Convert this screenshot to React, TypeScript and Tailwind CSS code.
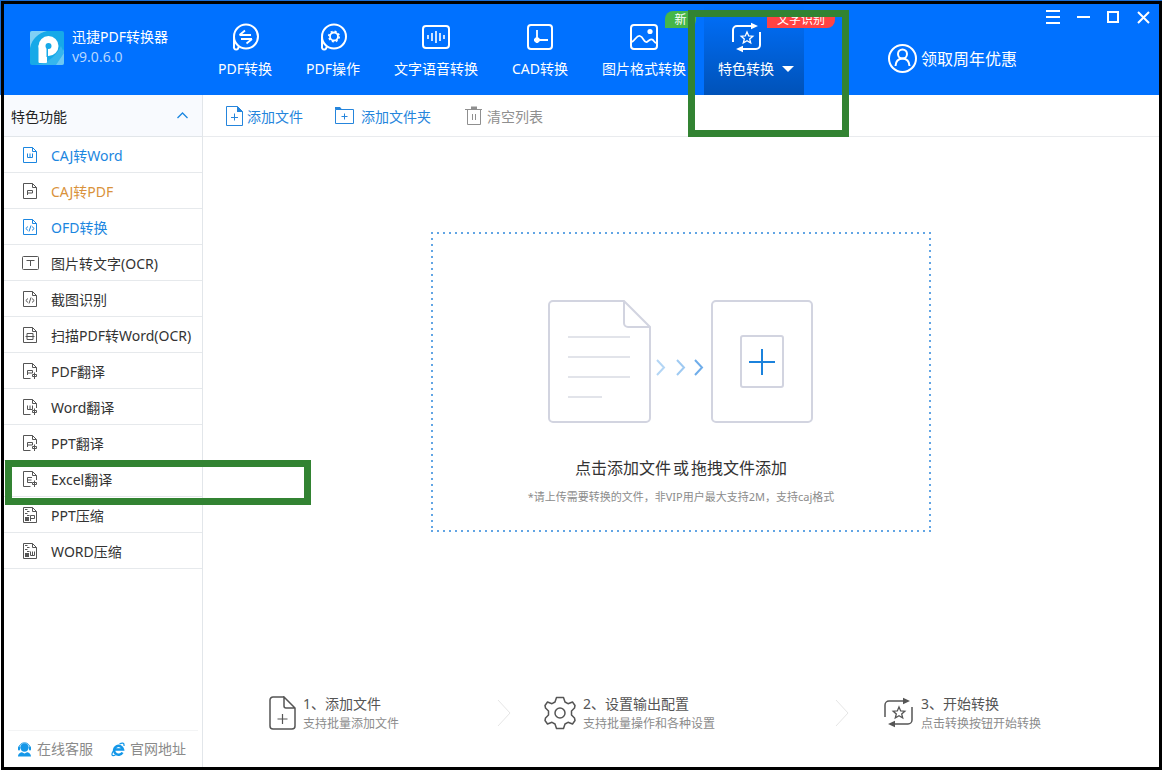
import React from "react";

type IconProps = { className?: string };

const Svg = ({
  w,
  h,
  className = "",
  sw = 1,
  children,
}: {
  w: number;
  h: number;
  className?: string;
  sw?: number;
  children: React.ReactNode;
}) => (
  <svg
    width={w}
    height={h}
    viewBox={`0 0 ${w} ${h}`}
    fill="none"
    stroke="currentColor"
    strokeWidth={sw}
    className={`shrink-0 ${className}`}
    aria-hidden="true"
  >
    {children}
  </svg>
);

const Logo = () => (
  <svg width="34" height="34" viewBox="0 0 34 34" className="shrink-0" aria-hidden="true">
    <defs>
      <clipPath id="logo-clip">
        <rect width="34" height="34" rx="2" />
      </clipPath>
    </defs>
    <g clipPath="url(#logo-clip)">
      <rect width="34" height="34" fill="#16a9e8" />
      <path d="M0 0H17C8 2 2 8 0 17Z" fill="#7fd0f5" />
      <path d="M34 18C32 27 26 33 17 34H34Z" fill="#6cc8f3" />
      <path d="M5 34C14 33 25 28 31 15L34 22L26 34Z" fill="#35b6ee" />
      <circle cx="18.5" cy="15" r="10" fill="#fff" />
      <rect x="8.500" y="14" width="8.500" height="18" rx="1" fill="#fff" />
      <circle cx="18.5" cy="15" r="3" fill="#16a9e8" />
      <rect x="16.500" y="15" width="1.500" height="11" fill="#16a9e8" />
    </g>
  </svg>
);

const ConvertIcon = () => (
  <Svg w={30} h={32} sw={2}>
    <circle cx="16" cy="14.500" r="12" />
    <path d="M4 15V24.500A2.300 2.300 0 1 0 8.400 24.500" />
    <path d="M9.500 13H21M9.500 13L15 8.500M22 17H11M22 17L16.500 21.500" strokeWidth="1.800" />
  </Svg>
);

const OperateIcon = () => (
  <Svg w={30} h={32} sw={2}>
    <circle cx="16" cy="14.500" r="12" />
    <path d="M4 15V24.500A2.300 2.300 0 1 0 8.400 24.500" />
    <circle cx="16" cy="14.500" r="4" strokeWidth="1.800" />
    <circle cx="16" cy="14.500" r="5.200" strokeWidth="1.600" strokeDasharray="2 2.080" />
  </Svg>
);

const VoiceIcon = () => (
  <Svg w={30} h={32} sw={2}>
    <rect x="2" y="4" width="26" height="22" rx="3" />
    <path d="M7 13V17M11 11V19M15 9V21M19 11V19M23 13V17" strokeWidth="1.600" />
  </Svg>
);

const CadIcon = () => (
  <Svg w={30} h={32} sw={2}>
    <rect x="3" y="3" width="24" height="24" rx="3" />
    <path d="M12 8V21M9 18H23" strokeWidth="1.800" />
    <circle cx="12" cy="18" r="2.800" fill="currentColor" stroke="none" />
  </Svg>
);

const ImageIcon = () => (
  <Svg w={30} h={32} sw={2}>
    <rect x="2" y="3" width="26" height="24" rx="3" />
    <circle cx="21" cy="9.500" r="2.600" fill="currentColor" stroke="none" />
    <path d="M3 20C7 17 8 13 11 14C15 15 14 21 18 20C21 18 22 16 24 18C25.500 20 26 21 27.500 21" strokeWidth="1.800" />
  </Svg>
);

const LoopStarIcon = ({ sw = 2 }: { sw?: number }) => (
  <Svg w={32} h={32} sw={sw}>
    <path d="M3 20V8A4 4 0 0 1 7 4H22M30 10V23A4 4 0 0 1 26 27H12" />
    <path d="M21 0.800L28 4L21 7.200ZM13 23.800L6 27L13 30.200Z" fill="currentColor" stroke="none" />
    <path
      d="M17 10L18.700 13.900L22.800 14.200L19.700 16.900L20.700 21L17 18.800L13.300 21L14.300 16.900L11.200 14.200L15.300 13.900Z"
      strokeWidth="1.300"
    />
  </Svg>
);

/* Sheet outline with a folded corner, shared by the sidebar icons. */
const sheet = "M0.500 0.500H9.500L13.500 4.500V15.500H0.500ZM9.500 0.500V4.500H13.500";
const openSheet = "M7.500 15.500H0.500V0.500H9.500L13.500 4.500V9M9.500 0.500V4.500H13.500";
const glyphW = "M4.500 6.500V10.500H9.500V6.500M7 6.500V10.500";
const glyphP = "M4.500 12V7.500H9.500V10H4.500";
const glyphE = "M9 6.500H4.500V11.500H9M4.500 9H8.500";
const transMark = "M9.500 11.500H13.500V13.500H9.500ZM11.500 9.500V16";

const Doc = ({ d, base = sheet }: { d: string; base?: string }) => (
  <Svg w={18} h={16}>
    <g transform="translate(1 0)">
      <path d={base} />
      <path d={d} />
    </g>
  </Svg>
);

const ZipDoc = ({ d }: { d: string }) => (
  <Svg w={18} h={16}>
    <g transform="translate(1 0)">
      <path d={sheet} />
      <path d="M2 2.500H4.500M4 4.500H6.500M2 6.500H4.500M4 8.500H6.500" />
      <rect x="2" y="10" width="4" height="4" fill="currentColor" stroke="none" />
      <path d={d} />
    </g>
  </Svg>
);

const OcrIcon = () => (
  <Svg w={18} h={16}>
    <rect x="0.500" y="1.500" width="16" height="13" rx="1" />
    <path d="M4.500 5.500H12.500M8.500 5.500V11" />
  </Svg>
);

const codeMark = "M5 7.500L2.800 9.500L5 11.500M9 7.500L11.200 9.500L9 11.500M8 6.500L6 12.500";

const navItems = [
  { label: "PDF转换", icon: <ConvertIcon /> },
  { label: "PDF操作", icon: <OperateIcon /> },
  { label: "文字语音转换", icon: <VoiceIcon /> },
  { label: "CAD转换", icon: <CadIcon /> },
  { label: "图片格式转换", icon: <ImageIcon />, badge: "新" },
];

const sideItems = [
  { label: "CAJ转Word", icon: <Doc d={glyphW} />, tone: "text-[#1b86e0]", iconTone: "text-[#1b86e0]" },
  { label: "CAJ转PDF", icon: <Doc d={glyphP} />, tone: "text-[#d9923b]", iconTone: "text-[#555]" },
  { label: "OFD转换", icon: <Doc d={codeMark} />, tone: "text-[#1b86e0]", iconTone: "text-[#1b86e0]" },
  { label: "图片转文字(OCR)", icon: <OcrIcon /> },
  { label: "截图识别", icon: <Doc d={codeMark} /> },
  { label: "扫描PDF转Word(OCR)", icon: <Doc d="M4 6.500H10V12.500H4ZM2.500 9.500H11.500" /> },
  { label: "PDF翻译", icon: <Doc base={openSheet} d={glyphP + transMark} /> },
  { label: "Word翻译", icon: <Doc base={openSheet} d={glyphW + transMark} /> },
  { label: "PPT翻译", icon: <Doc base={openSheet} d={glyphP + transMark} /> },
  { label: "Excel翻译", icon: <Doc base={openSheet} d={glyphE + transMark} />, marked: true },
  { label: "PPT压缩", icon: <ZipDoc d="M7.500 14V8.500H11.500V11.500H7.500" /> },
  { label: "WORD压缩", icon: <ZipDoc d="M7.500 8.500V12.500H11.500V8.500M9.500 8.500V12.500" /> },
];

const StepFile = () => (
  <Svg w={27} h={34} sw={1.5}>
    <path d="M15 1H4A3 3 0 0 0 1 4V30A3 3 0 0 0 4 33H23A3 3 0 0 0 26 30V12L15 1V10A2 2 0 0 0 17 12H26" />
    <path d="M13.500 18V28M8.500 23H18.500" strokeWidth="1.200" />
  </Svg>
);

const StepGear = () => (
  <Svg w={32} h={34} sw={1.5}>
    <path
      strokeLinejoin="round"
      d="M12.500 1.500H19.500L21 6L24 7.700L28.500 6L31 9.500L30.500 12L27.500 15V19L30.500 22L31 24.500L28.500 28L24 26.300L21 28L19.500 32.500H12.500L11 28L8 26.300L3.500 28L1 24.500L1.500 22L4.500 19V15L1.500 12L1 9.500L3.500 6L8 7.700L11 6Z"
    />
    <circle cx="16" cy="17" r="5" />
  </Svg>
);

const StepChevron = () => (
  <Svg w={14} h={28} className="mr-[33px] text-[#e6e6e6]">
    <path d="M1 1L13 14L1 27" />
  </Svg>
);

const Step = ({ icon, title, note, grow }: { icon: React.ReactNode; title: string; note: string; grow: string }) => (
  <div className={`flex items-center gap-[7px] ${grow}`}>
    <span className="text-[#555]">{icon}</span>
    <div className="pt-0.5 whitespace-nowrap">
      <p className="text-sm leading-5 text-[#555]">{title}</p>
      <p className="text-xs leading-5 text-[#8c8c8c]">{note}</p>
    </div>
  </div>
);

const Illustration = ({ className = "" }: IconProps) => (
  <svg width="266" height="124" viewBox="0 0 266 124" fill="none" className={className} aria-hidden="true">
    <g stroke="#d2d4e0" strokeWidth="2">
      <path d="M76 1H5A4 4 0 0 0 1 5V118A4 4 0 0 0 5 122H98A4 4 0 0 0 102 118V27L76 1V23A4 4 0 0 0 80 27H102" />
      <rect x="164" y="1" width="100" height="121" rx="4" />
      <rect x="193" y="36" width="42" height="51" rx="2" />
    </g>
    <path d="M20 37H82M20 57H82M20 77H82M20 97H54" stroke="#e2e4ea" strokeWidth="2" />
    <path d="M109 60L116 67.500L109 75" stroke="#b4d6f5" strokeWidth="2" />
    <path d="M129 60L136 67.500L129 75" stroke="#9fcaf2" strokeWidth="2" />
    <path d="M147 60L154 67.500L147 75" stroke="#6fadea" strokeWidth="2" />
    <path d="M214 49V75M201 62H227" stroke="#1b82dc" strokeWidth="2" />
  </svg>
);

export default function App() {
  return (
    <div className="flex min-h-screen flex-col bg-[linear-gradient(#1c6fd6_0_95px,#fff_95px)] pt-px pl-px font-['Noto_Sans','Noto_Sans_CJK_SC',sans-serif] text-sm">
      <div className="flex grow flex-col border-[3px] border-black bg-white">
        <header className="relative z-10 flex h-[91px] shrink-0 bg-[#0071ff] text-white">
          <div className="flex w-[198px] shrink-0 items-start gap-2 pt-[27px] pl-[26px]">
            <Logo />
            <div className="-mt-1 whitespace-nowrap">
              <h1 className="text-sm leading-5">迅捷PDF转换器</h1>
              <p className="text-sm leading-5 text-[#b5d6ff]">v9.0.6.0</p>
            </div>
          </div>

          <nav className="flex gap-[2px] whitespace-nowrap">
            {navItems.map((item) => (
              <button key={item.label} type="button" className="relative flex flex-col items-center px-4 pt-[18px]">
                {item.icon}
                <span className="mt-[5px] leading-5">{item.label}</span>
                {item.badge && (
                  <span className="absolute top-[7px] left-[79px] h-[17px] w-[31px] rounded-tl-lg rounded-br-lg bg-[#45b649] text-center text-xs leading-[17px]">
                    {item.badge}
                  </span>
                )}
              </button>
            ))}
            <div className="relative flex">
              <button
                type="button"
                className="flex w-[100px] flex-col items-start bg-linear-to-b from-[#0071ff] to-[#0052b8] pt-[18px] pl-[14px]"
              >
                <span className="flex w-14 justify-center">
                  <LoopStarIcon />
                </span>
                <span className="mt-[5px] flex items-center gap-2 leading-5">
                  特色转换
                  <Svg w={12} h={6}>
                    <path d="M0 0H12L6 6Z" fill="currentColor" stroke="none" />
                  </Svg>
                </span>
              </button>
              <span className="absolute top-[7px] left-[63px] h-[17px] w-[68px] rounded-br-lg bg-[#ff4343] text-center text-xs leading-[17px]">
                文字识别
              </span>
              <span className="pointer-events-none absolute top-[6px] -right-[45px] -bottom-[42px] -left-4 border-[7px] border-[#328332]" />
            </div>
          </nav>

          <button type="button" className="ml-[84px] flex items-center gap-1 self-start pt-10 text-base whitespace-nowrap">
            <Svg w={29} h={29} sw={2}>
              <circle cx="14.500" cy="14.500" r="13.500" />
              <circle cx="14.500" cy="10" r="4.500" />
              <path d="M7.500 22C7.500 17.500 10.500 14.500 14.500 14.500S21.500 17.500 21.500 22" />
            </Svg>
            <span className="leading-6">领取周年优惠</span>
          </button>

          <div className="ml-auto flex items-start gap-4 pt-[6px] pr-[9px]">
            <button type="button" aria-label="菜单">
              <Svg w={14} h={15} sw={2}>
                <path d="M0 1H14M0 7H14M0 13H14" />
              </Svg>
            </button>
            <button type="button" aria-label="最小化">
              <Svg w={14} h={15} sw={2}>
                <path d="M1 7H14" />
              </Svg>
            </button>
            <button type="button" aria-label="最大化">
              <Svg w={14} h={15} sw={2}>
                <rect x="2" y="2" width="10" height="10" />
              </Svg>
            </button>
            <button type="button" aria-label="关闭">
              <Svg w={14} h={15} sw={2}>
                <path d="M2 2L13 13M13 2L2 13" />
              </Svg>
            </button>
          </div>
        </header>

        <div className="flex grow">
          <aside className="flex w-[199px] shrink-0 flex-col border-r border-[#e2e6ea]">
            <button
              type="button"
              className="flex h-[42px] shrink-0 items-center justify-between border-b border-[#e2e6ea] bg-[#f8fafe] pr-[14px] pl-[7px] text-[#222]"
            >
              <span className="pt-0.5">特色功能</span>
              <Svg w={11} h={7} sw={1.3} className="text-[#1b86e0]">
                <path d="M0.500 6L5.500 1L10.500 6" />
              </Svg>
            </button>
            <ul>
              {sideItems.map((item) => (
                <li key={item.label} className="relative border-b border-[#e6e9ec]">
                  <button
                    type="button"
                    className={`flex h-[35px] w-full items-center gap-[11px] pl-[18px] whitespace-nowrap ${item.tone ?? "text-[#333]"}`}
                  >
                    <span className={item.iconTone ?? "text-[#555]"}>{item.icon}</span>
                    <span className="pt-0.5">{item.label}</span>
                  </button>
                  {item.marked && (
                    <span className="pointer-events-none absolute -top-px left-px z-10 h-[45px] w-[306px] border-[7px] border-[#328332]" />
                  )}
                </li>
              ))}
            </ul>
            <div className="mx-1 mt-auto flex h-[37px] items-center gap-[18px] border-t border-[#f3f4f5] pl-[9px] whitespace-nowrap text-[#8a8a8a]">
              <a href="#service" className="flex items-center gap-[5px]">
                <svg width="15" height="15" viewBox="0 0 15 15" className="text-[#1497e8]" aria-hidden="true">
                  <circle cx="7.500" cy="5.500" r="4.200" fill="currentColor" />
                  <path d="M1.800 6.500A5.700 5.700 0 0 1 13.200 6.500" fill="none" stroke="currentColor" />
                  <rect x="1" y="4.500" width="2" height="4" rx="1" fill="currentColor" />
                  <rect x="12" y="4.500" width="2" height="4" rx="1" fill="currentColor" />
                  <path d="M1 14.500C1 11.500 4 10.300 5 10.300L7.500 11.500L10 10.300C11 10.300 14 11.500 14 14.500Z" fill="currentColor" />
                </svg>
                在线客服
              </a>
              <a href="#site" className="flex items-center gap-[5px]">
                <svg width="14" height="15" viewBox="0 0 14 15" fill="none" stroke="#1497e8" aria-hidden="true">
                  <path d="M11.500 10.500A4.500 4.500 0 1 1 12 7.500H4" strokeWidth="2.500" />
                  <path d="M8.500 2C11 0.500 13.500 0.500 13 4M2.500 8.500C0 12.500 0.500 15 4.500 13" strokeWidth="1.200" />
                </svg>
                官网地址
              </a>
            </div>
          </aside>

          <main className="flex min-w-0 grow flex-col">
            <div className="flex h-[42px] shrink-0 items-center border-b border-[#e9ebee] pl-[22px] whitespace-nowrap text-[#2585dc]">
              <button type="button" className="flex items-center gap-1">
                <Svg w={18} h={20}>
                  <path d="M1.500 0.500H12.500L17.500 5.500V19.500H1.500Z" />
                  <path d="M12 0V6H18Z" fill="currentColor" stroke="none" />
                  <path d="M9.500 7.500V14.500M6 11.500H13" />
                </Svg>
                <span className="pt-0.5">添加文件</span>
              </button>
              <button type="button" className="ml-8 flex items-center gap-[6px]">
                <Svg w={20} h={20}>
                  <path d="M0.500 3.500H18.500V17.500H0.500Z" />
                  <path d="M0 1H5L7 3.500H0Z" fill="currentColor" stroke="none" />
                  <path d="M9.500 7.500V13.500M6.500 10.500H12.500" />
                </Svg>
                <span className="pt-0.5">添加文件夹</span>
              </button>
              <button type="button" className="ml-[34px] flex items-center gap-[5px] text-[#8f8f8f]">
                <Svg w={17} h={20}>
                  <path d="M0 3.500H17M2.500 3.500V18.500H15.500V3.500M7.500 8V14M10.500 8V14" />
                  <rect x="6" y="0.500" width="6" height="3" fill="currentColor" stroke="none" />
                </Svg>
                <span className="pt-0.5">清空列表</span>
              </button>
            </div>

            <button
              type="button"
              className="mx-auto mt-[95px] flex h-[300px] w-[500px] shrink-0 flex-col items-center bg-[repeating-linear-gradient(90deg,#62a5e4_0_2px,transparent_2px_6px),repeating-linear-gradient(90deg,#62a5e4_0_2px,transparent_2px_6px),repeating-linear-gradient(#62a5e4_0_2px,transparent_2px_6px),repeating-linear-gradient(#62a5e4_0_2px,transparent_2px_6px)] bg-[size:100%_2px,100%_2px,2px_100%,2px_100%] bg-[position:0_0,0_100%,0_0,100%_0] bg-no-repeat pt-[68px]"
            >
              <Illustration />
              <span className="mt-8 text-base leading-6 text-[#333]">
                点击添加文件<span className="mx-0.5">或</span>拖拽文件添加
              </span>
              <span className="mt-2 text-[11px] leading-[18px] text-[#8c8c8c]">
                *请上传需要转换的文件，非VIP用户最大支持2M，支持caj格式
              </span>
            </button>

            <div className="mt-auto flex items-center pb-[33px] pl-[66px]">
              <Step grow="flex-[228]" icon={<StepFile />} title="1、添加文件" note="支持批量添加文件" />
              <StepChevron />
              <Step grow="flex-[291]" icon={<StepGear />} title="2、设置输出配置" note="支持批量操作和各种设置" />
              <StepChevron />
              <Step grow="flex-[277]" icon={<LoopStarIcon sw={1.5} />} title="3、开始转换" note="点击转换按钮开始转换" />
            </div>
          </main>
        </div>
      </div>
    </div>
  );
}
